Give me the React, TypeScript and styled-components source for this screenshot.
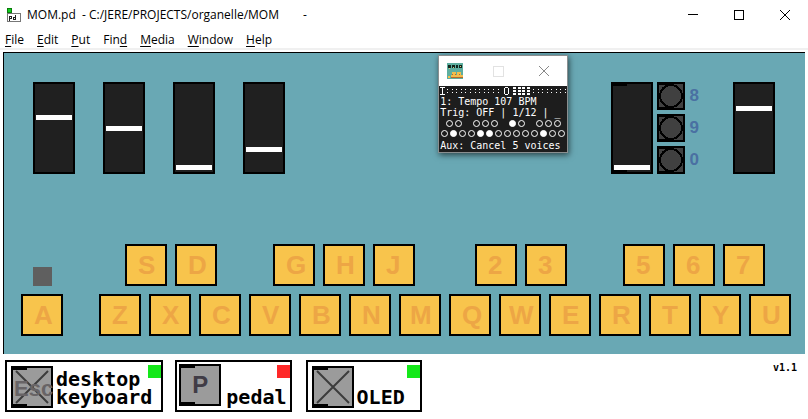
import React, { useState } from "react";
import styled, { createGlobalStyle, css } from "styled-components";

const uiFont = `"Open Sans", "Noto Sans", sans-serif`;
const labelFont = `"Liberation Sans", Arial, sans-serif`;
const monoFont = `"DejaVu Sans Mono", monospace`;

const GlobalStyle = createGlobalStyle`
  *, *::before, *::after { box-sizing: border-box; }
  body { margin: 0; background: #fff; color: #000; font-family: ${uiFont}; font-size: 12px; }
  button { border: 0; padding: 0; background: none; color: inherit; font: inherit; cursor: pointer; }
`;

/* Small black inlet and outlet marks in the left corners of a box */
const ports = css`
  background-image: linear-gradient(#000, #000), linear-gradient(#000, #000);
  background-size: 14px 2px;
  background-position: left top, left bottom;
  background-repeat: no-repeat;
`;

const TitleBar = styled.header`
  display: flex;
  align-items: center;
  height: 30px;
  padding-left: 7px;
`;
const Title = styled.h1`
  flex: 1;
  display: flex;
  gap: 24px;
  margin: 0 0 0 6px;
  font-size: 12px;
  font-weight: 400;
  line-height: 16px;
  white-space: pre;
`;
const WindowButton = styled.button`
  display: grid;
  place-items: center;
  width: 46px;
  height: 28px;
`;
const MenuBar = styled.nav`
  display: flex;
  gap: 13px;
  height: 20px;
  padding-left: 5px;
  border-bottom: 2px solid #f0f0f0;
`;
const MenuItem = styled.button`
  height: 19px;
  font-size: 12px;
  line-height: 19px;
  u { text-underline-offset: 2px; }
`;

const Panel = styled.main`
  position: relative;
  margin: 2px 3px 0;
  padding: 29px 0 18px;
  border: solid #000;
  border-width: 1px 0 0 1px;
  background: #69a8b4;
`;
const Controls = styled.div`
  display: flex;
  justify-content: space-between;
  padding: 0 30px 0 29px;
`;
const Knobs = styled.div`
  display: flex;
  gap: 28px;
`;
const Outputs = styled.div`
  display: flex;
  gap: 4px;
`;
const Fader = styled.input.attrs({ type: "range", min: 0, max: 79 })<{ $ports?: boolean }>`
  appearance: none;
  writing-mode: vertical-lr;
  direction: rtl;
  width: 42px;
  height: 92px;
  margin: 0;
  padding: 2px 0;
  border: 2px solid #000;
  background-color: #202020;
  ${(p) => p.$ports && ports}
  &::-webkit-slider-thumb {
    appearance: none;
    width: 36px;
    height: 5px;
    border-radius: 0;
    background: #fff;
  }
`;
const Bangs = styled.div`
  display: grid;
  gap: 4px;
  margin-right: 30px;
`;
const BangButton = styled.button`
  display: flex;
  align-items: center;
  gap: 5px;
  height: 28px;
  color: #4a70a2;
  font: 700 17px/30px ${labelFont};
`;

const Keys = styled.div`
  display: flex;
  justify-content: space-between;
  padding: 0 14px 0 17px;
  margin-top: 70px;
`;
const AuxColumn = styled.div`
  display: flex;
  flex-direction: column;
  align-items: center;
  justify-content: flex-end;
  gap: 8px;
`;
const AuxLight = styled.span`
  width: 19px;
  height: 19px;
  background: #5f5f5f;
`;
const Keyboard = styled.div`
  display: grid;
  gap: 8px;
`;
const KeyRow = styled.div`
  display: flex;
  gap: 8px;
`;
const KeyGroup = styled.div<{ $before: number }>`
  display: flex;
  gap: 8px;
  margin-left: ${(p) => p.$before}px;
`;
const KeyCap = styled.button<{ $inset: number }>`
  width: 42px;
  height: 42px;
  padding-left: ${(p) => p.$inset}px;
  border: 2px solid #000;
  background: #f8c44c;
  color: #eda645;
  font: 700 26px/38px ${labelFont};
  text-align: left;
`;

const Oled = styled.section`
  position: absolute;
  top: 2px;
  left: 54.2%;
  width: 130px;
  border: 1px solid #8a8f90;
  background: #1d1d1d;
  color: #fff;
  box-shadow: 1px 2px 6px rgba(0, 0, 0, 0.6);
`;
const OledBar = styled.header`
  display: grid;
  grid-template-columns: 46px 46px auto;
  align-items: center;
  height: 30px;
  padding-left: 8px;
  background: #fff;
  button { justify-self: start; }
`;
const OledScreen = styled.div`
  padding-bottom: 1px;
  svg { display: block; }
`;
const OledLine = styled.p<{ $tall?: boolean }>`
  margin: 0;
  padding-left: 1px;
  font: 10px/${(p) => (p.$tall ? 12 : 11)}px ${monoFont};
  white-space: pre;
`;

const Footer = styled.footer`
  display: flex;
  align-items: flex-start;
  padding: 6px 11px 0 5px;
`;
const Card = styled.div<{ $tight?: boolean; $room: number }>`
  position: relative;
  display: flex;
  gap: ${(p) => (p.$tight ? 5 : 3)}px;
  height: 52px;
  margin-right: ${(p) => (p.$tight ? 14 : 12)}px;
  padding: ${(p) => (p.$tight ? 2 : 4)}px ${(p) => p.$room}px 0 ${(p) => (p.$tight ? 2 : 4)}px;
  border: 2px solid #000;
  background: #fff;
`;
const Caption = styled.label`
  align-self: flex-end;
  padding-bottom: 4px;
  font: 700 20px/18px ${monoFont};
  white-space: pre;
`;
const Status = styled.span<{ $on: boolean }>`
  position: absolute;
  top: 3px;
  right: 0;
  width: 13px;
  height: 13px;
  background: ${(p) => (p.$on ? "#14e81a" : "#ff2828")};
`;
const boxFace = css`
  width: 42px;
  height: 42px;
  border: 2px solid #000;
  background-color: #9b9b9b;
  ${ports}
`;
const ToggleFrame = styled.span`
  display: grid;
  flex: none;
  width: 42px;
  height: 42px;
  > * { grid-area: 1 / 1; }
  svg { margin: 2px; pointer-events: none; display: none; }
  input:checked + svg { display: block; }
`;
const ToggleInput = styled.input.attrs({ type: "checkbox" })`
  appearance: none;
  margin: 0;
  ${boxFace}
`;
const ToggleText = styled.span`
  padding-left: 3px;
  color: #686466;
  font: 700 22px/46px ${labelFont};
  pointer-events: none;
`;
const PedalButton = styled.button`
  && {
    ${boxFace}
  }
  color: #403c46;
  font: 700 24px/38px ${labelFont};
`;
const Version = styled.span`
  margin-left: auto;
  font: 700 10px/16px ${monoFont};
`;

const menus: [string, string, string][] = [
  ["", "F", "ile"],
  ["", "E", "dit"],
  ["", "P", "ut"],
  ["Fin", "d", ""],
  ["", "M", "edia"],
  ["", "W", "indow"],
  ["", "H", "elp"],
];
/* Each group of sharps with the space in front of it */
const sharps: [string, number][] = [
  ["SD", 26],
  ["GHJ", 48],
  ["23", 52],
  ["567", 48],
];
const naturals = "ZXCVBNMQWERTYU";

function Key({ name }: { name: string }) {
  const inset = name === "W" ? 8 : name === "M" ? 9 : 11;
  return <KeyCap $inset={inset}>{name}</KeyCap>;
}

function Slider({ name, start, withPorts }: { name: string; start: number; withPorts?: boolean }) {
  const [value, setValue] = useState(start);
  return (
    <Fader
      aria-label={name}
      $ports={withPorts}
      value={value}
      onChange={(e: React.ChangeEvent<HTMLInputElement>) => setValue(Number(e.target.value))}
    />
  );
}

function Bang({ name }: { name: string }) {
  return (
    <BangButton>
      <svg width="28" height="28" shapeRendering="crispEdges">
        <rect x="1" y="1" width="26" height="26" fill="#414141" stroke="#000" strokeWidth="2" />
        <path d="M2 2h14v1H2zM2 25h14v1H2z" fill="#000" />
        <circle cx="14" cy="14" r="11" fill="#404040" stroke="#000" strokeWidth="2" />
      </svg>
      {name}
    </BangButton>
  );
}

function Toggle({ id, text }: { id: string; text?: string }) {
  return (
    <ToggleFrame>
      <ToggleInput id={id} defaultChecked />
      <svg width="38" height="38" stroke="#3c3c3c" strokeWidth="2">
        <path d="M3 3L35 35M35 3L3 35" />
      </svg>
      {text && <ToggleText>{text}</ToggleText>}
    </ToggleFrame>
  );
}

function PdIcon() {
  return (
    <svg width="14" height="14" shapeRendering="crispEdges">
      <rect x="0.5" y="5.5" width="13" height="8" fill="#fff" stroke="#777" />
      <rect x="0" y="0" width="5" height="5" fill="#0a7a0a" />
      <rect x="1" y="1" width="3" height="3" fill="#10d020" />
      <path d="M2 8h3v3H3v2H2zM3 9v1h1V9zM8 7h1v5H6V9h2zM7 10v1h1v-1z" fill="#222" fillRule="evenodd" />
    </svg>
  );
}

function OrganelleIcon() {
  return (
    <svg width="16" height="16" shapeRendering="crispEdges">
      <rect width="16" height="16" fill="#5eae9f" />
      <path d="M1 2h3v3H1zM5 2h3v3H5zM9 2h2v3H9zM12 2h3v3h-3z" fill="#10251c" />
      <path d="M2 5h1v1H2zM6 4h1v1H6zM13 3h1v1h-1z" fill="#d9c77a" />
      <path d="M5 9h4v3H5zM10 9h4v3h-4zM4 12h12v3H4zM1 13h2v2H1z" fill="#f2bd4c" />
      <path d="M5 11h1v1H5zM8 11h1v1H8zM12 11h1v1h-1zM4 14h12v1H4z" fill="#b5672c" />
    </svg>
  );
}

function Levels() {
  const left = Array.from({ length: 12 }, (_, i) => 8 + Math.round(i * 4.6));
  const right = Array.from({ length: 8 }, (_, i) => 94 + Math.round(i * 4.5));
  return (
    <svg width="128" height="10" shapeRendering="crispEdges" fill="#fff">
      <path d="M1 1h5v1H1zM1 8h5v1H1zM3 2h1v6H3z" />
      {[...left, ...right].map((x) => (
        <path key={x} d={`M${x} 3h1v1h-1zM${x} 6h1v1h-1z`} />
      ))}
      <path d="M66 1h3v1h-3zM66 8h3v1h-3zM65 2h1v6h-1zM69 2h1v6h-1z" />
      {[74, 79, 83, 88].map((x) =>
        [1, 4, 7].map((y) => <rect key={`${x}-${y}`} x={x} y={y} width={3} height={2} />)
      )}
    </svg>
  );
}

function KeyLights() {
  const upper = [10, 19, 37, 46, 55, 73, 82, 100, 109, 118];
  const lower = Array.from({ length: 14 }, (_, i) => 5 + i * 9);
  const litUpper = [5];
  const litLower = [1, 4, 5, 11];
  return (
    <svg width="128" height="21" stroke="#fff">
      {upper.map((x, i) => (
        <circle key={x} cx={x + 0.5} cy="4.5" r="3" fill={litUpper.includes(i) ? "#fff" : "none"} />
      ))}
      {lower.map((x, i) => (
        <circle key={x} cx={x + 0.5} cy="14.5" r="3" fill={litLower.includes(i) ? "#fff" : "none"} />
      ))}
    </svg>
  );
}

export default function App() {
  return (
    <>
      <GlobalStyle />
      <TitleBar>
        <PdIcon />
        <Title>
          <span>{"MOM.pd  - C:/JERE/PROJECTS/organelle/MOM"}</span>
          <span>-</span>
        </Title>
        <WindowButton aria-label="Minimize">
          <svg width="10" height="10" stroke="#000"><path d="M0 4.5h10" /></svg>
        </WindowButton>
        <WindowButton aria-label="Maximize">
          <svg width="10" height="10" stroke="#000" fill="none"><rect x="0.5" y="0.5" width="9" height="9" /></svg>
        </WindowButton>
        <WindowButton aria-label="Close">
          <svg width="10" height="10" stroke="#000"><path d="M0 0l10 10M10 0L0 10" /></svg>
        </WindowButton>
      </TitleBar>
      <MenuBar>
        {menus.map(([before, key, after]) => (
          <MenuItem key={before + key + after}>
            {before}
            <u>{key}</u>
            {after}
          </MenuItem>
        ))}
      </MenuBar>

      <Panel>
        <Controls>
          <Knobs>
            <Slider name="Knob 1" start={50} />
            <Slider name="Knob 2" start={39} />
            <Slider name="Knob 3" start={0} />
            <Slider name="Knob 4" start={18} />
          </Knobs>
          <Outputs>
            <Slider name="Encoder" start={0} withPorts />
            <Bangs>
              <Bang name="8" />
              <Bang name="9" />
              <Bang name="0" />
            </Bangs>
            <Slider name="Volume" start={59} />
          </Outputs>
        </Controls>

        <Keys>
          <AuxColumn>
            <AuxLight />
            <Key name="A" />
          </AuxColumn>
          <Keyboard>
            <KeyRow>
              {sharps.map(([group, before]) => (
                <KeyGroup key={group} $before={before}>
                  {[...group].map((k) => <Key key={k} name={k} />)}
                </KeyGroup>
              ))}
            </KeyRow>
            <KeyRow>
              {[...naturals].map((k) => <Key key={k} name={k} />)}
            </KeyRow>
          </Keyboard>
        </Keys>

        <Oled aria-label="OLED display">
          <OledBar>
            <OrganelleIcon />
            <svg width="11" height="11" fill="none" stroke="#e2e2e2"><rect x="0.5" y="0.5" width="10" height="10" /></svg>
            <button aria-label="Close display">
              <svg width="10" height="10" stroke="#888" display="block"><path d="M0 0l10 10M10 0L0 10" /></svg>
            </button>
          </OledBar>
          <OledScreen>
            <Levels />
            <OledLine>1: Tempo 107 BPM</OledLine>
            <OledLine $tall>Trig: OFF | 1/12 | _</OledLine>
            <KeyLights />
            <OledLine>Aux: Cancel 5 voices</OledLine>
          </OledScreen>
        </Oled>
      </Panel>

      <Footer>
        <Card $room={9}>
          <Toggle id="desktop" text="Esc" />
          <Caption htmlFor="desktop">{"desktop\nkeyboard"}</Caption>
          <Status $on />
        </Card>
        <Card $tight $room={3}>
          <PedalButton id="pedal">P</PedalButton>
          <Caption htmlFor="pedal">pedal</Caption>
          <Status $on={false} />
        </Card>
        <Card $room={15}>
          <Toggle id="oled" />
          <Caption htmlFor="oled">OLED</Caption>
          <Status $on />
        </Card>
        <Version>v1.1</Version>
      </Footer>
    </>
  );
}
